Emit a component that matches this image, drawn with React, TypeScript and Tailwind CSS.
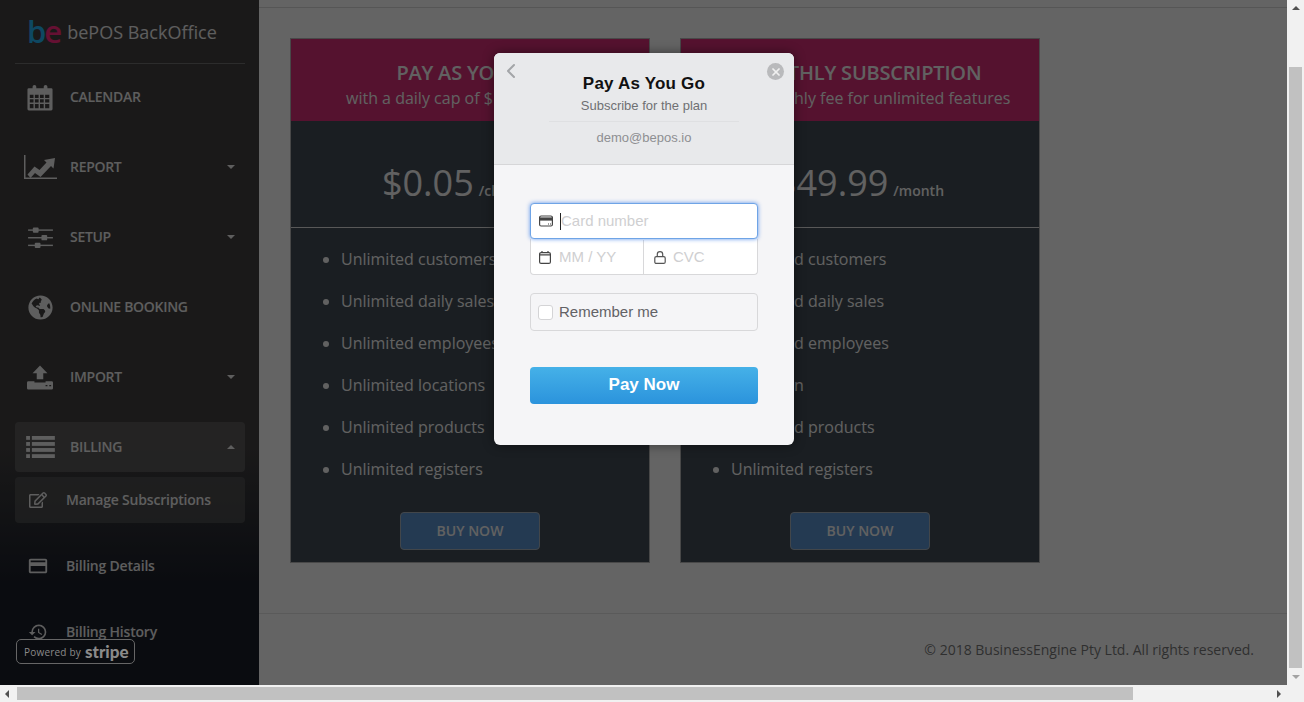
import { FaGlobeAmericas, FaRegEdit } from "react-icons/fa";
import { MdCreditCard, MdHistory } from "react-icons/md";
import { ChevronLeft, X } from "lucide-react";

function CalendarIcon() {
  return (
    <svg width="26" height="27" viewBox="0 0 28 28" fill="currentColor">
      <path fillRule="evenodd" d="M2 4h4V2.500a2 2 0 0 1 4 0V4h8V2.500a2 2 0 0 1 4 0V4h4a1.500 1.500 0 0 1 1.500 1.500v21A1.500 1.500 0 0 1 26 28H2a1.500 1.500 0 0 1-1.500-1.500v-21A1.500 1.500 0 0 1 2 4zM3 11v3.500h4V11zm5.500 0v3.500h4V11zm5.500 0v3.500h4V11zm5.500 0v3.500h4.500V11zM3 16v3.500h4V16zm5.500 0v3.500h4V16zm5.500 0v3.500h4V16zm5.500 0v3.500h4.500V16zM3 21v4.500h4V21zm5.500 0v4.500h4V21zm5.500 0v4.500h4V21zm5.500 0v4.500h4.500V21z" />
    </svg>
  );
}

function ReportIcon() {
  return (
    <svg width="33" height="24" viewBox="0 0 33 24" fill="currentColor">
      <path d="M0 0h1.500v22.500H33V24H0z" />
      <path d="M3.500 19.500l7-8 5 3.500 7-7.500-2.500-2.500L31 3l-1.500 10.500-2.500-2.500-10.500 11-5.500-4-4.500 5z" />
    </svg>
  );
}

function SlidersIcon() {
  return (
    <svg width="25" height="21" viewBox="0 0 26 22" fill="currentColor">
      <rect x="0" y="2.500" width="26" height="1.500" />
      <rect x="5" y="0.500" width="6" height="5.500" rx="1" />
      <rect x="0" y="10.500" width="26" height="1.500" />
      <rect x="14" y="8.500" width="6" height="5.500" rx="1" />
      <rect x="0" y="18.500" width="26" height="1.500" />
      <rect x="7" y="16.500" width="6" height="5.500" rx="1" />
    </svg>
  );
}

function ImportIcon() {
  return (
    <svg width="26" height="25" viewBox="0 0 28 26" fill="currentColor">
      <path d="M14 0l8 8.500h-4.500V15h-7V8.500H6z" />
      <path fillRule="evenodd" d="M1.500 17H8v1.500h12V17h6.500A1.500 1.500 0 0 1 28 18.500v6a1.500 1.500 0 0 1-1.500 1.500h-25A1.500 1.500 0 0 1 0 24.500v-6A1.500 1.500 0 0 1 1.500 17zM20 21v1.500h2V21zm4 0v1.500h2V21z" />
    </svg>
  );
}

function RowsIcon() {
  return (
    <svg width="29" height="22" viewBox="0 0 30 23" fill="currentColor">
      <rect x="0" y="0" width="4" height="4" />
      <rect x="6" y="0" width="24" height="4" />
      <rect x="0" y="6.300" width="4" height="4" />
      <rect x="6" y="6.300" width="24" height="4" />
      <rect x="0" y="12.600" width="4" height="4" />
      <rect x="6" y="12.600" width="24" height="4" />
      <rect x="0" y="19" width="4" height="4" />
      <rect x="6" y="19" width="24" height="4" />
    </svg>
  );
}

function Caret({ up }: { up?: boolean }) {
  return (
    <span
      className={
        up
          ? "absolute right-[10px] top-[23px] border-x-4 border-b-4 border-x-transparent border-b-[#eaeaea]"
          : "absolute right-[10px] top-[33px] border-x-4 border-t-4 border-x-transparent border-t-[#eaeaea]"
      }
    />
  );
}

function MenuItem({ icon, label, caret }: { icon: React.ReactNode; label: string; caret?: boolean }) {
  return (
    <div className="relative flex h-[70px] items-center text-[#eaeaea]">
      <div className="mr-[5px] flex w-[50px] shrink-0 justify-center">{icon}</div>
      <span className="text-sm font-semibold tracking-[-0.3px]">{label}</span>
      {caret && <Caret />}
    </div>
  );
}

function SubItem({ icon, label, active }: { icon: React.ReactNode; label: string; active?: boolean }) {
  return (
    <div className={`flex h-[46px] items-center rounded text-[#eaeaea] ${active ? "bg-[#5c5c5c]/60" : ""}`}>
      <div className="mr-[5px] flex w-[46px] shrink-0 justify-center">{icon}</div>
      <span className="text-sm font-semibold tracking-[-0.2px]">{label}</span>
    </div>
  );
}

function Sidebar() {
  return (
    <aside className="relative h-full w-[259px] shrink-0 overflow-hidden bg-gradient-to-b from-[#424040] from-65% to-[#1b1f29] to-85% pl-[15px] pr-[14px]">
      <div className="flex h-[64px] items-center border-b border-[#6e6e6e] pl-[12px]">
        <span className="text-[31px] font-semibold leading-none tracking-[-2px]">
          <span className="text-[#23b5f5]">b</span>
          <span className="text-[#ff2a80]">e</span>
        </span>
        <span className="ml-[7px] mt-[1px] text-lg text-[#eaeaea]">bePOS BackOffice</span>
      </div>
      <div className="-mt-[2px]">
        <MenuItem icon={<CalendarIcon />} label="CALENDAR" />
        <MenuItem icon={<ReportIcon />} label="REPORT" caret />
        <MenuItem icon={<SlidersIcon />} label="SETUP" caret />
        <MenuItem icon={<FaGlobeAmericas size={25} />} label="ONLINE BOOKING" />
        <MenuItem icon={<ImportIcon />} label="IMPORT" caret />
      </div>
      <div className="relative mt-[10px] flex h-[50px] items-center rounded bg-[#6a6a6a]/60 text-[#eaeaea]">
        <div className="mr-[5px] flex w-[50px] shrink-0 justify-center">
          <RowsIcon />
        </div>
        <span className="text-sm font-semibold tracking-[-0.3px]">BILLING</span>
        <Caret up />
      </div>
      <div className="mt-[5px] flex flex-col gap-5">
        <SubItem active icon={<FaRegEdit size={18} />} label="Manage Subscriptions" />
        <SubItem icon={<MdCreditCard size={22} />} label="Billing Details" />
        <SubItem icon={<MdHistory size={20} />} label="Billing History" />
      </div>
    </aside>
  );
}

function PlanCard({
  title,
  subtitle,
  price,
  unit,
  features,
}: {
  title: string;
  subtitle: string;
  price: string;
  unit: string;
  features: string[];
}) {
  return (
    <div className="flex h-[525px] w-[360px] flex-col border border-[#b4b4b4] bg-[#424b55] text-[#f3f3f3]">
      <div className="flex h-[82px] flex-col items-center justify-center bg-[#d42f75] pt-[10px]">
        <div className="whitespace-nowrap text-xl font-semibold leading-[26px] tracking-[-0.2px]">{title}</div>
        <div className="whitespace-nowrap text-base leading-[24px]">{subtitle}</div>
      </div>
      <div className="flex h-[107px] items-center justify-center gap-[5px] border-b border-[#dcdcdc] pt-[18px]">
        <span className="text-[36px]">{price}</span>
        <span className="mt-[16px] text-sm font-semibold">{unit}</span>
      </div>
      <ul className="mt-[10px] list-disc pl-[50px] marker:text-[#f3f3f3]">
        {features.map((f) => (
          <li key={f} className="h-[42px] text-base leading-[42px]">
            {f}
          </li>
        ))}
      </ul>
      <div className="mt-[22px] flex justify-center">
        <button className="h-[38px] w-[140px] rounded border border-[#a6b0ba] bg-[#5a91cd] text-sm font-semibold text-[#f3f3f3]">
          BUY NOW
        </button>
      </div>
    </div>
  );
}

function CardIcon() {
  return (
    <svg width="14" height="12" viewBox="0 0 14 12" fill="none" stroke="#444" strokeWidth="1.200">
      <rect x="0.600" y="1" width="12.800" height="10" rx="1.500" />
      <rect x="0.600" y="3" width="12.800" height="2" fill="#444" />
      <path d="M9 9h1M11 9h1" />
    </svg>
  );
}

function DateIcon() {
  return (
    <svg width="12" height="13" viewBox="0 0 12 13" fill="none" stroke="#444" strokeWidth="1.200">
      <rect x="0.600" y="1.600" width="10.800" height="10.800" rx="1.500" />
      <path d="M0.600 3.800h10.800M3 0v2M9 0v2" />
    </svg>
  );
}

function LockIcon() {
  return (
    <svg width="12" height="13" viewBox="0 0 12 13" fill="none" stroke="#555" strokeWidth="1.200">
      <rect x="0.800" y="5.600" width="10.400" height="6.800" rx="1.500" />
      <path d="M3.300 5.500V3.300a2.700 2.700 0 0 1 5.400 0v2.200" />
    </svg>
  );
}

function CheckoutModal() {
  return (
    <div className="absolute left-[494px] top-[53px] flex h-[392px] w-[300px] flex-col overflow-hidden rounded-md bg-[#f5f5f7] font-['Liberation_Sans',sans-serif] shadow-[0_0_12px_rgba(0,0,0,0.45)]">
      <div className="relative flex h-[112px] flex-col items-center border-b border-[#d6d6d8] bg-[#e8e9eb]">
        <ChevronLeft size={24} strokeWidth={2} className="absolute left-[5px] top-[6px] text-[#a3a5a8]" />
        <div className="absolute right-[10px] top-[10px] flex size-[17px] items-center justify-center rounded-full bg-[#b9babc]">
          <X size={12} strokeWidth={3.500} className="text-[#f0f0f0]" />
        </div>
        <div className="mt-[20px] text-[17px] font-bold leading-[22px] tracking-[0.2px] text-[#111]">Pay As You Go</div>
        <div className="mt-[1px] text-[13px] leading-[20px] text-[#6f7073]">Subscribe for the plan</div>
        <div className="mt-[5px] h-px w-[190px] bg-[#dfe0e2]" />
        <div className="mt-[7px] text-[13px] leading-[18px] text-[#8e8f92]">demo@bepos.io</div>
      </div>
      <div className="flex flex-col px-[36px] pt-[38px]">
        <div className="relative z-10 flex h-[36px] items-center rounded border border-[#6fa4e6] bg-white pl-[8px] shadow-[0_0_4px_rgba(80,140,235,0.9)]">
          <CardIcon />
          <span className="ml-[7px] h-[17px] w-px bg-[#222]" />
          <span className="text-[15px] text-[#cfcfd1]">Card number</span>
        </div>
        <div className="flex h-[36px] rounded-b border border-t-0 border-[#d8d8da] bg-white pt-[1px]">
          <div className="flex w-[113px] items-center border-r border-[#d8d8da] pl-[8px]">
            <DateIcon />
            <span className="ml-[8px] text-[15px] text-[#cfcfd1]">MM / YY</span>
          </div>
          <div className="flex flex-1 items-center pl-[10px]">
            <LockIcon />
            <span className="ml-[7px] text-[15px] text-[#cfcfd1]">CVC</span>
          </div>
        </div>
        <div className="mt-[18px] flex h-[38px] items-center rounded border border-[#d8d8da] pl-[7px]">
          <span className="size-[15px] rounded-[3px] border border-[#d4d4d6] bg-white" />
          <span className="ml-[6px] text-[15px] text-[#626266]">Remember me</span>
        </div>
        <button className="mt-[36px] h-[37px] rounded bg-gradient-to-b from-[#45b1e8] to-[#2b93dc] pb-[2px] text-[17px] font-bold text-white">
          Pay Now
        </button>
      </div>
    </div>
  );
}

function StripeBadge() {
  return (
    <div className="absolute left-[16px] top-[639px] flex h-[25px] w-[119px] items-center rounded-[5px] border border-[#666] pl-[7px] text-[#8a8a8a]">
      <span className="whitespace-nowrap text-[10px] leading-none tracking-[0.2px]">Powered by</span>
      <span className="ml-[4px] font-['Lato',sans-serif] text-[17px] font-black leading-none">stripe</span>
    </div>
  );
}

export default function App() {
  const left = ["Unlimited customers", "Unlimited daily sales", "Unlimited employees", "Unlimited locations", "Unlimited products", "Unlimited registers"];
  const right = ["Unlimited customers", "Unlimited daily sales", "Unlimited employees", "1 location", "Unlimited products", "Unlimited registers"];

  return (
    <div className="flex h-[702px] w-[1304px] flex-col overflow-hidden bg-[#f1f1f1] font-['Open_Sans',sans-serif]">
      <div className="flex min-h-0 flex-1">
        <div className="relative flex h-[685px] w-[1287px] overflow-hidden">
          <Sidebar />
          <main className="flex flex-1 flex-col bg-[#fbfbfb]">
            <div className="h-[8px] border-b border-[#d8d8d8]" />
            <div className="flex h-[605px] gap-[30px] pl-[31px] pt-[30px]">
              <PlanCard
                title="PAY AS YOU GO"
                subtitle="with a daily cap of $19.99 per day"
                price="$0.05"
                unit="/clients/day"
                features={left}
              />
              <PlanCard
                title="MONTHLY SUBSCRIPTION"
                subtitle="A low monthly fee for unlimited features"
                price="$49.99"
                unit="/month"
                features={right}
              />
            </div>
            <footer className="flex flex-1 items-center justify-end border-t border-[#e2e2e2] pr-[33px] text-sm text-[#777]">
              © 2018 BusinessEngine Pty Ltd. All rights reserved.
            </footer>
          </main>
          <div className="absolute inset-0 bg-black/60" />
          <StripeBadge />
          <CheckoutModal />
        </div>
        <div className="flex w-[17px] flex-col items-center bg-[#f1f1f1]">
          <span className="mt-[6px] border-x-4 border-b-4 border-x-transparent border-b-[#505050]" />
          <div className="mt-[57px] h-[601px] w-[13px] bg-[#c1c1c1]" />
          <span className="mt-[7px] border-x-4 border-t-4 border-x-transparent border-t-[#a3a3a3]" />
        </div>
      </div>
      <div className="flex h-[17px] items-center bg-[#f1f1f1]">
        <span className="ml-[5px] border-y-4 border-r-4 border-y-transparent border-r-[#505050]" />
        <div className="ml-[8px] h-[13px] w-[1116px] bg-[#c1c1c1]" />
        <span className="ml-[144px] border-y-4 border-l-4 border-y-transparent border-l-[#505050]" />
      </div>
    </div>
  );
}
